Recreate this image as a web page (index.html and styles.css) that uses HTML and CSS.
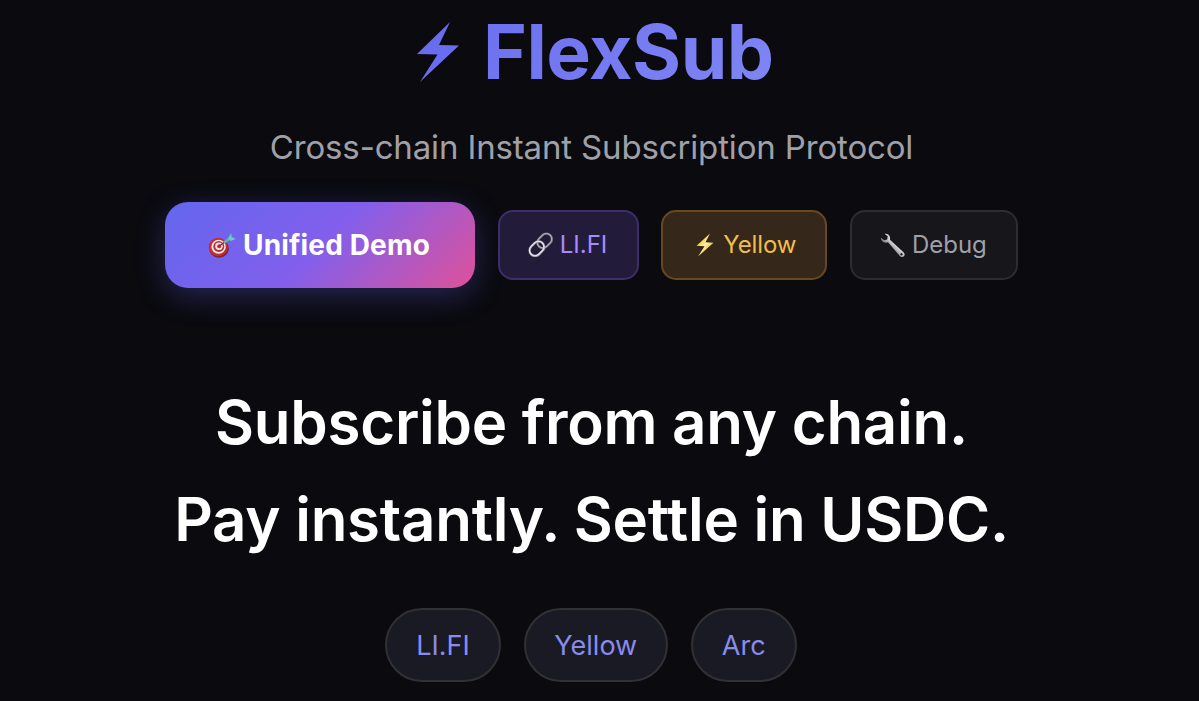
FILE: index.html
```html
<!DOCTYPE html>
<html lang="en">
<head>
<meta charset="utf-8">
<title>FlexSub</title>
<link rel="stylesheet" href="styles.css">
</head>
<body>
<main class="page">
  <h1 class="brand">
    <svg class="brand-bolt" viewBox="0 0 42 60"><defs><linearGradient id="brand" x1="0" y1="0" x2="1" y2="1"><stop offset="0" stop-color="#6769ef"/><stop offset="1" stop-color="#6d70f1"/></linearGradient></defs><path d="M33 0 0 32 20.500 32.500 3 60 42 23.500 22 23Z" fill="url(#brand)"/></svg>
    <span class="brand-name">FlexSub</span>
  </h1>
  <p class="tagline">Cross-chain Instant Subscription Protocol</p>
  <nav class="actions">
    <a class="btn btn-primary">
      <svg class="icon-target" viewBox="0 0 28 26"><ellipse cx="11" cy="16.500" rx="9.800" ry="9.300" fill="#83212b"/><ellipse cx="10.300" cy="15" rx="9.500" ry="9.300" fill="#c52d30"/><ellipse cx="10.600" cy="14.700" rx="7.200" ry="7" fill="#f4e9e6"/><ellipse cx="10.800" cy="14.500" rx="5.500" ry="5.400" fill="#bd2b30"/><ellipse cx="11" cy="14.300" rx="3.800" ry="3.700" fill="#f4e9e6"/><circle cx="11.200" cy="14.200" r="2" fill="#bd2b30"/><path d="m11.500 14 8-6" stroke="#5b3b48" stroke-width="1.500"/><path d="m16 10.500 7-5" stroke="#5ab9b5" stroke-width="2.600"/><path d="m20 6.500 3-5.200.8 3.600 4 2-5 2.200Z" fill="#62d0bd"/></svg>
      <span>Unified Demo</span>
    </a>
    <a class="btn btn-lifi">
      <svg class="icon-link" viewBox="0 0 26 26" fill="none"><g transform="rotate(-45 13 13)"><rect x="10.500" y="7.200" width="16" height="11" rx="5.500" stroke="#77747f" stroke-width="2.300"/><rect x="10.500" y="6.900" width="16" height="11" rx="5.500" stroke="#b5b3bb" stroke-width="1"/><rect x="-.5" y="7.200" width="16" height="11" rx="5.500" stroke="#aaa8b3" stroke-width="2.300"/><rect x="-.5" y="6.900" width="16" height="11" rx="5.500" stroke="#eeeef3" stroke-width="1"/></g></svg>
      <span>LI.FI</span>
    </a>
    <a class="btn btn-yellow">
      <svg class="icon-bolt" viewBox="0 0 18 24"><defs><linearGradient id="gold" x1="0" y1="0" x2="1" y2="1"><stop offset=".2" stop-color="#f4bd38"/><stop offset=".5" stop-color="#fff3a1"/><stop offset=".8" stop-color="#efad32"/></linearGradient></defs><path d="M14 .5.500 12.700l8 .5-6.500 10.300L17.500 9.700l-8-.5Z" fill="url(#gold)"/></svg>
      <span>Yellow</span>
    </a>
    <a class="btn btn-debug">
      <svg class="icon-wrench" viewBox="0 0 26 25"><defs><linearGradient id="steel" x1="0" y1="1" x2="1" y2="0"><stop offset=".35" stop-color="#77777b"/><stop offset=".55" stop-color="#d1d1d3"/></linearGradient></defs><path fill-rule="evenodd" d="M4.500.8C8 .2 10.800 2.500 10 6.700L23.500 19.200c3 3-.6 6.500-3.500 4L8 9.300C4.300 10.600.8 8.200 1 4.800l3 2.500 3.200-.8.500-3.200ZM20.700 20.500a1.100 1.100 0 1 0 1.600 1.500 1.100 1.100 0 1 0-1.600-1.500Z" fill="url(#steel)"/></svg>
      <span>Debug</span>
    </a>
  </nav>
  <h2 class="headline">Subscribe from any chain.<br>Pay instantly. Settle in USDC.</h2>
  <div class="pills">
    <span class="pill pill-lifi">LI.FI</span>
    <span class="pill pill-yellow">Yellow</span>
    <span class="pill pill-arc">Arc</span>
  </div>
</main>
</body>
</html>
```
FILE: styles.css
```css
* { box-sizing: border-box; }
body {
  margin: 0;
  height: 701px;
  overflow: hidden;
  background: #0a0a0f;
  color: #fff;
  font-family: Inter, "Liberation Sans", sans-serif;
}
.page {
  width: 1183px;
  display: flex;
  flex-direction: column;
  align-items: center;
}
.brand {
  margin: 0;
  padding-left: 4px;
  width: 357px;
  height: 104px;
  display: flex;
  align-items: center;
  gap: 24px;
  font-size: 75px;
  line-height: 104px;
  font-weight: 700;
  letter-spacing: -.5px;
}
.brand-bolt { width: 42px; height: 60px; flex: none; }
.brand-name {
  background: linear-gradient(135deg, #6c6ff0, #8087f4);
  background-clip: text;
  -webkit-background-clip: text;
  color: transparent;
}
.tagline {
  margin: 17px 0 0;
  font-size: 33px;
  line-height: 52px;
  letter-spacing: -.15px;
  color: #a0a0a8;
  white-space: nowrap;
}
.actions {
  margin-top: 29px;
  display: flex;
  align-items: center;
  gap: 22.6px;
}
.btn {
  height: 70px;
  border: 2px solid;
  border-radius: 15px;
  display: flex;
  align-items: center;
  font-size: 24px;
  white-space: nowrap;
}
.btn svg { flex: none; }
.btn span { padding-bottom: 2px; }
.btn-primary {
  width: 310px;
  height: 86px;
  padding-left: 43px;
  gap: 7px;
  border: 0;
  border-radius: 23px;
  background: linear-gradient(135deg, #6366ee 0%, #825fec 50%, #df5199 100%);
  box-shadow: 0 8px 30px rgba(99, 102, 241, .3);
  font-size: 28px;
  font-weight: 700;
  letter-spacing: .15px;
}
.btn-primary span { padding-bottom: 0; }
.btn-lifi { width: 141px; padding-left: 28px; gap: 6px; background: #221b3a; border-color: #3e2e69; color: #a78bfa; }
.btn-yellow { width: 166px; padding-left: 33px; gap: 9px; background: #35271a; border-color: #674920; color: #f0be4f; letter-spacing: -.1px; }
.btn-debug { width: 168px; padding-left: 28px; gap: 6px; background: #16161b; border-color: #2c2c31; color: #a0a0a8; }
.icon-target { width: 28px; height: 26px; }
.icon-link { width: 26px; height: 26px; }
.icon-bolt { width: 18px; height: 24px; }
.icon-wrench { width: 26px; height: 25px; }
.headline {
  margin: 86px 0 0;
  font-size: 60px;
  line-height: 97px;
  font-weight: 600;
  letter-spacing: -.25px;
  text-align: center;
  white-space: nowrap;
}
.pills { margin: 40px 1px 0 0; display: flex; gap: 22.5px; }
.pill {
  height: 74px;
  border: 2px solid #303035;
  border-radius: 37px;
  background: #1a1a24;
  color: #898ced;
  font-size: 27px;
  display: flex;
  align-items: center;
  justify-content: center;
}
.pill-lifi { width: 116px; }
.pill-yellow { width: 144.5px; }
.pill-arc { width: 106.5px; }
```
